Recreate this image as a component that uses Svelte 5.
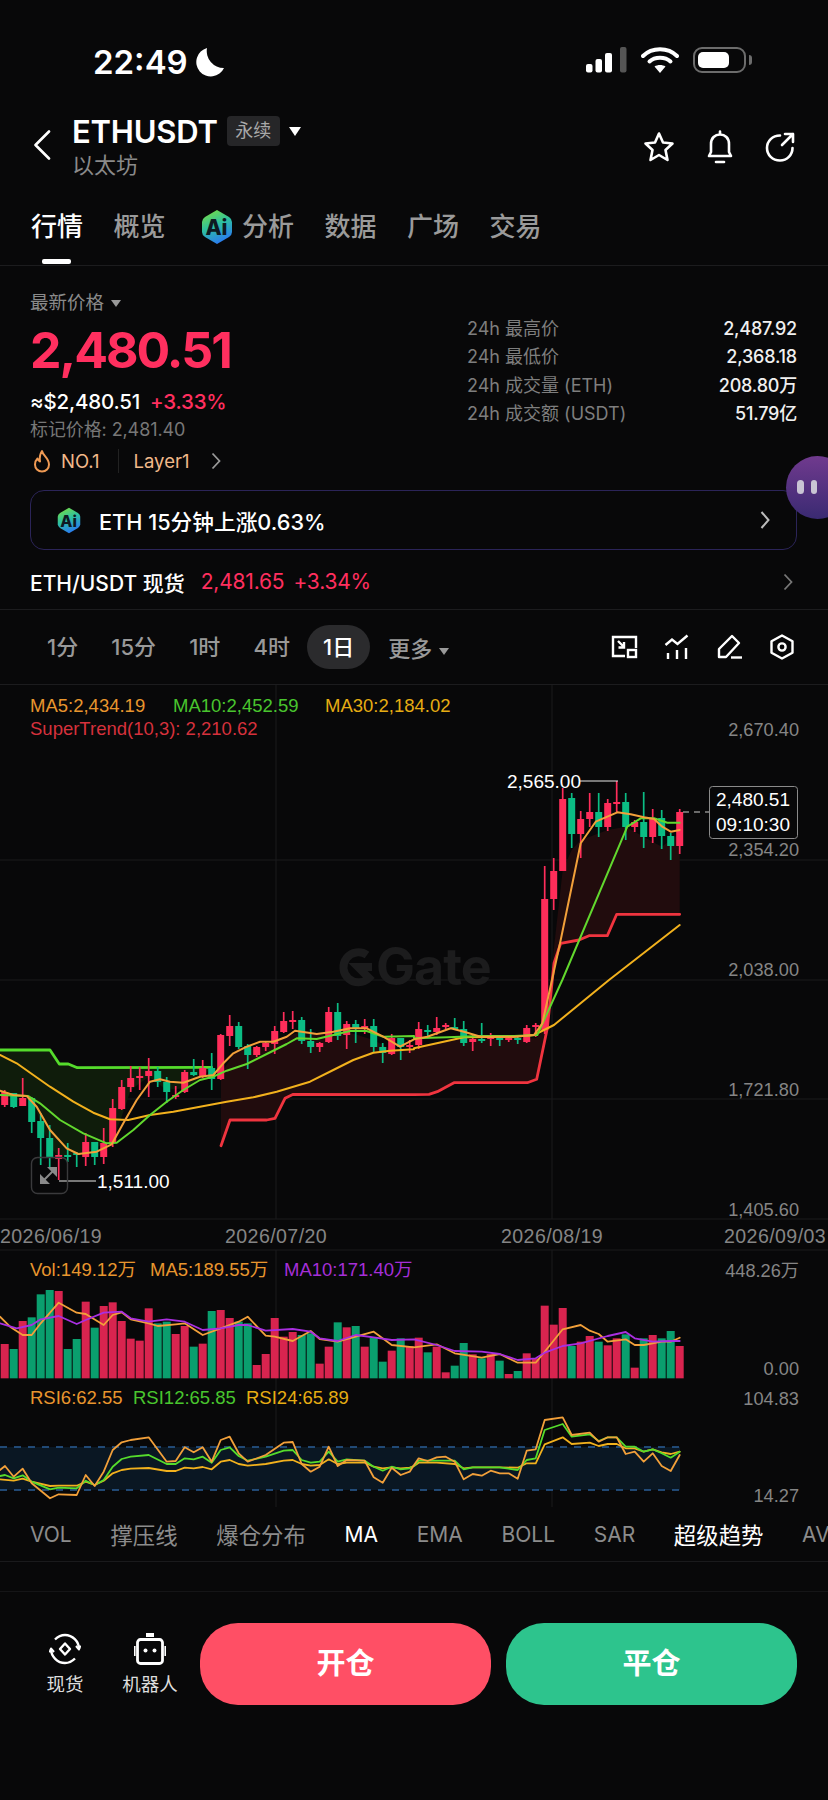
<script>
  const G = '#0bbd84', R = '#ff2d5a';
  // [bodyTop, bodyBottom, wickTop, wickBottom, colour]
  const raw = [
    [1092,1105,1090,1107,'r'],[1093,1107,1093,1108,'g'],[1098,1106,1078,1106,'r'],[1098,1122,1097,1133,'g'],
    [1121,1138,1113,1165,'g'],[1138,1158,1125,1167,'g'],[1155,1159,1148,1180,'r'],[1155,1157,1143,1162,'g'],
    [1153,1155,1152,1167,'g'],[1142,1157,1133,1166,'r'],[1142,1157,1142,1165,'g'],[1143,1157,1128,1164,'r'],
    [1108,1143,1099,1147,'r'],[1087,1109,1080,1110,'r'],[1078,1087,1066,1092,'r'],[1076,1078,1067,1090,'r'],
    [1071,1076,1058,1097,'r'],[1071,1082,1067,1087,'g'],[1082,1092,1077,1103,'g'],[1095,1097,1086,1099,'r'],
    [1072,1092,1070,1093,'r'],[1072,1075,1059,1076,'g'],[1068,1077,1060,1078,'r'],[1068,1079,1053,1090,'g'],
    [1035,1079,1034,1080,'r'],[1026,1036,1015,1046,'r'],[1026,1047,1022,1049,'g'],[1046,1055,1044,1069,'g'],
    [1047,1055,1046,1057,'r'],[1043,1047,1041,1051,'r'],[1031,1044,1026,1054,'r'],[1021,1032,1012,1033,'r'],
    [1020,1022,1011,1029,'r'],[1020,1041,1017,1044,'g'],[1041,1047,1029,1053,'g'],[1043,1047,1042,1052,'r'],
    [1012,1042,1007,1043,'r'],[1012,1036,1003,1040,'g'],[1024,1035,1021,1049,'r'],[1024,1029,1020,1043,'g'],
    [1026,1028,1019,1034,'r'],[1026,1047,1019,1053,'g'],[1047,1053,1043,1063,'g'],[1038,1054,1034,1055,'r'],
    [1038,1047,1038,1060,'g'],[1045,1047,1040,1053,'r'],[1029,1045,1022,1049,'r'],[1030,1032,1025,1036,'g'],
    [1028,1032,1017,1035,'r'],[1025,1027,1023,1029,'r'],[1027,1029,1018,1030,'g'],[1029,1043,1021,1046,'g'],
    [1039,1042,1035,1051,'r'],[1039,1041,1023,1043,'g'],[1037,1039,1033,1046,'r'],[1038,1040,1035,1046,'g'],
    [1038,1040,1037,1042,'r'],[1038,1040,1036,1044,'g'],[1028,1042,1025,1043,'r'],[1025,1027,1023,1037,'r'],
    [899,1030,866,1034,'r'],[871,899,858,910,'r'],[799,871,788,871,'r'],[798,834,793,848,'g'],
    [819,834,811,858,'r'],[812,819,793,827,'r'],[812,827,793,837,'g'],[803,827,799,831,'r'],
    [802,804,781,813,'r'],[802,827,793,840,'g'],[822,827,820,832,'r'],[822,837,792,848,'g'],
    [818,837,809,843,'r'],[818,836,810,849,'g'],[836,846,833,860,'g'],[812,846,809,854,'r']
  ];
  const cx = (i) => 4.7 + 9 * i;
  const candles = raw.map((c, i) => ({ x: cx(i), t: c[0], b: c[1], h: c[2], l: c[3], col: c[4] === 'g' ? G : R }));

  const volTops = [
    [312,'r'],[327,'g'],[243,'r'],[232,'g'],[163,'g'],[150,'g'],[153,'r'],[327,'g'],[297,'g'],[185,'r'],[263,'g'],[198,'r'],
    [187,'r'],[243,'r'],[296,'r'],[302,'r'],[205,'r'],[250,'g'],[245,'g'],[282,'r'],[258,'r'],[320,'g'],[311,'r'],[213,'g'],
    [210,'r'],[234,'r'],[245,'g'],[250,'g'],[375,'r'],[342,'r'],[234,'r'],[290,'r'],[276,'r'],[285,'g'],[280,'g'],[371,'r'],
    [320,'r'],[247,'g'],[262,'r'],[258,'g'],[320,'r'],[292,'g'],[365,'g'],[332,'r'],[295,'g'],[318,'r'],
    [293,'r'],[337,'g'],[320,'r'],[397,'r'],[377,'g'],[309,'g'],[343,'r'],[355,'g'],[342,'r'],[362,'g'],[402,'r'],[393,'g'],
    [340,'r'],[355,'r'],[197,'r'],[254,'r'],[204,'r'],[318,'g'],[305,'r'],[288,'r'],[305,'g'],[316,'r'],[295,'r'],[283,'g'],
    [383,'r'],[295,'g'],[285,'r'],[295,'g'],[273,'g'],[318,'r']
  ];
  const vols = volTops.map((v, i) => ({ x: cx(i) - 4, y: 1240 + v[0] / 3, h: (415 - v[0]) / 3, col: v[1] === 'g' ? '#0a9f6e' : '#d8244f' }));

  // zoom-crop coordinates → page coordinates
  const z = (ox, oy) => (pts) => pts.map(([x, y]) => [ox + x / 3, oy + y / 3]);
  const z5 = z(0, 960), z6 = z(414, 980), z4 = z(414, 680), z7 = z(0, 1240), z8 = z(414, 1240);
  const P = (pts) => pts.map((p) => p[0].toFixed(1) + ',' + p[1].toFixed(1)).join(' ');

  const ma5 = P([...z5([[0,392],[40,405],[80,408],[110,440],[150,510],[200,565],[235,582],[290,575],[335,553],[370,490],[410,420],[450,365],[480,358],[510,365],[550,368],[600,350],[640,345],[670,310],[700,280],[740,260],[780,245],[820,245],[860,230],[885,212],[950,222],[1000,215],[1050,205],[1100,205],[1150,230],[1200,260]]),
    ...z6([[0,178],[40,170],[110,145],[150,155],[200,170],[300,170],[360,165],[385,130]]),
    ...z4([[414,900],[440,780],[500,490],[545,425],[610,397],[650,403],[690,412],[720,417],[745,440],[770,455],[797,450]])]);
  const ma10 = P([...z5([[0,405],[85,408],[120,430],[180,480],[250,520],[320,550],[350,548],[400,510],[450,465],[500,425],[550,390],[600,360],[640,350],[680,332],[740,312],[800,282],[860,252],[890,235],[950,237],[1000,225],[1050,213],[1100,213],[1150,230],[1242,228]]),
    ...z6([[0,175],[100,172],[200,168],[300,168],[370,165]]),
    ...z4([[445,900],[640,440],[680,415],[720,415],[760,428],[797,428]])]);
  const ma30 = P([...z5([[0,285],[50,310],[100,345],[150,380],[220,425],[280,458],[330,478],[385,480],[450,465],[520,455],[600,440],[680,425],[760,412],[830,395],[930,365],[1000,330],[1060,300],[1120,278],[1170,272],[1242,268]]),
    ...z6([[0,205],[150,172],[300,170],[360,165],[420,135]]),
    ...z4([[585,900],[797,735]])]);
  const stGreen = z5([[0,270],[150,270],[178,312],[205,312],[232,323],[635,322]]);
  const stGreenFill = [...stGreen, ...z5([[608,350],[554,385],[500,390],[446,350],[392,390],[365,470],[338,540],[284,565],[230,585],[176,590],[150,560],[122,490],[95,410],[0,395]])];
  const stRed = [...z5([[663,557],[690,480],[800,480],[825,475],[855,415],[880,403],[1242,404]]),
    ...z6([[45,343],[70,335],[120,308],[340,308],[368,298],[400,145]]),
    ...z4([[420,850],[440,790],[495,780],[525,767],[580,767],[608,703],[797,703]])];
  const stRedFill = [...z5([[663,340],[716,260],[770,270],[824,240],[905,215],[986,225],[1040,215],[1121,240],[1175,270],[1242,265]]),
    ...z6([[0,200],[150,175],[365,175],[392,150]]),
    ...z4([[446,570],[473,510],[500,480],[527,470],[581,450],[635,440],[689,470],[743,500],[797,460]]),
    ...[...stRed].reverse()];

  const vma5 = P([...z7([[0,230],[30,260],[68,285],[95,285],[122,250],[176,188],[230,218],[257,222],[311,255],[338,225],[365,217],[392,238],[446,250],[473,258],[527,253],[554,250],[608,285],[662,265],[716,245],[743,230],[797,287],[824,290],[878,303],[932,273],[959,297],[1013,305],[1067,290],[1121,275],[1175,315],[1242,322]]),
    ...z8([[68,313],[122,340],[203,353],[257,342],[311,368],[365,368],[392,335],[446,268],[500,255],[527,272],[554,282],[581,305],[635,298],[662,315],[689,315],[743,305],[770,305],[797,293]])]);
  const vma10 = P([...z7([[0,250],[50,265],[95,255],[122,238],[176,228],[230,252],[257,240],[311,218],[365,215],[392,235],[446,245],[500,238],[554,245],[608,270],[662,265],[716,255],[743,255],[797,272],[878,267],[932,275],[959,295],[1013,303],[1067,285],[1121,292],[1175,300],[1242,298]]),
    ...z8([[68,315],[122,333],[203,335],[257,342],[311,360],[365,355],[392,338],[446,318],[500,310],[581,288],[635,276],[662,295],[716,305],[770,303],[797,303]])]);

  const rsi6 = P([...z7([[0,690],[15,678],[41,710],[68,686],[95,730],[150,775],[176,763],[230,765],[257,705],[284,738],[311,695],[338,630],[365,607],[392,600],[446,592],[500,665],[527,663],[554,622],[581,637],[608,622],[635,665],[662,600],[689,590],[716,640],[743,665],[797,645],[851,608],[878,606],[905,672],[932,695],[959,680],[986,620],[1013,678],[1040,660],[1094,662],[1121,712],[1148,728],[1175,683],[1202,705],[1229,695]]),
    ...z8([[0,675],[14,655],[41,663],[68,652],[95,650],[122,665],[149,718],[176,702],[203,707],[230,692],[257,700],[284,700],[311,716],[338,632],[365,628],[392,540],[446,532],[473,585],[527,578],[554,605],[581,592],[608,592],[635,642],[662,635],[689,665],[716,640],[743,678],[770,693],[797,645]])]);
  const rsi12 = P([...z7([[0,708],[15,705],[41,715],[68,706],[95,725],[150,748],[176,743],[230,745],[257,722],[284,735],[311,720],[338,680],[365,657],[392,650],[446,645],[500,672],[527,672],[554,655],[581,658],[608,650],[635,668],[662,630],[689,622],[716,648],[743,662],[797,650],[851,632],[878,630],[905,660],[932,668],[959,665],[986,635],[1013,665],[1040,658],[1094,662],[1121,680],[1148,692],[1175,680],[1202,688],[1229,685]]),
    ...z8([[0,678],[14,662],[68,662],[122,662],[149,688],[176,682],[257,682],[311,690],[338,660],[365,655],[392,570],[446,552],[473,590],[527,583],[554,603],[581,592],[608,592],[635,620],[662,620],[689,635],[716,628],[743,640],[770,653],[797,635]])]);
  const rsi24 = P([...z7([[0,718],[41,722],[68,716],[95,725],[150,738],[176,737],[230,737],[257,725],[284,735],[311,722],[338,700],[365,690],[392,686],[446,684],[500,693],[527,693],[554,683],[581,685],[608,681],[635,688],[662,665],[689,660],[716,672],[743,677],[797,672],[851,662],[878,660],[905,672],[932,677],[959,675],[986,658],[1013,672],[1040,668],[1094,668],[1121,680],[1148,685],[1175,682],[1202,685],[1229,683]]),
    ...z8([[0,678],[14,668],[68,668],[122,672],[149,685],[176,682],[257,682],[311,683],[338,670],[365,670],[392,613],[446,592],[473,612],[527,608],[554,618],[581,612],[608,612],[635,625],[662,625],[689,635],[716,628],[743,637],[770,642],[797,635]])]);

  const priceAxis = [['2,670.40',729],['2,354.20',849],['2,038.00',969],['1,721.80',1089],['1,405.60',1209]];
  const dates = [['2026/06/19',0],['2026/07/20',225],['2026/08/19',501],['2026/09/03',724]];
  const stats = [['24h 最高价','2,487.92'],['24h 最低价','2,368.18'],['24h 成交量 (ETH)','208.80万'],['24h 成交额 (USDT)','51.79亿']];
  const tabs = ['概览'];
  const tabsAfter = ['数据','广场','交易'];
  const frames = ['1分','15分','1时','4时','1日'];
  const inds = ['VOL','撑压线','爆仓分布','MA','EMA','BOLL','SAR','超级趋势','AVL'];
  const isCjk = (s) => /[^\x00-\x7f]/.test(s);
</script>

{#snippet aiIcon(w, h)}
  <svg class="ai" width={w} height={h} viewBox="0 0 32 36">
    <defs>
      <linearGradient id="aig" x1="0.1" y1="0" x2="0.5" y2="1">
        <stop offset="0" stop-color="#7fe03a" />
        <stop offset="0.5" stop-color="#2dc0a0" />
        <stop offset="1" stop-color="#2a7cf0" />
      </linearGradient>
    </defs>
    <path d="M16 1 L28 8 Q31 10 31 13 V23 Q31 26 28 28 L16 35 L4 28 Q1 26 1 23 V13 Q1 10 4 8Z" fill="url(#aig)" />
    <text class="aitext" x="15.5" y="26">Ai</text>
  </svg>
{/snippet}

<div class="page">
  <div class="status">
    <span class="time">22:49</span>
    <svg class="moon" width="30" height="30" viewBox="0 0 30 30"><path d="M12 1 A14.5 14.5 0 1 0 29 21 A17 17 0 0 1 12 1Z" fill="#fff" /></svg>
    <span class="grow"></span>
    <svg width="42" height="26" viewBox="0 0 42 26">
      <rect x="0" y="17" width="6.5" height="8.5" rx="2" fill="#fff" /><rect x="9.5" y="12" width="6.5" height="13.5" rx="2" fill="#fff" />
      <rect x="19" y="6" width="7" height="19.5" rx="2" fill="#fff" /><rect x="34" y="0" width="6.5" height="25.5" rx="2" fill="#555" />
    </svg>
    <svg class="wifi" width="38" height="26" viewBox="0 0 38 26" fill="none" stroke="#fff" stroke-linecap="round">
      <path d="M2 9 C11 0 27 0 36 9" stroke-width="4" /><path d="M8.5 14.5 C14 9.5 24 9.5 29.5 14.5" stroke-width="4" />
      <path d="M19 26 L13.5 19.5 C16.5 17.5 21.5 17.5 24.5 19.5Z" fill="#fff" stroke="none" />
    </svg>
    <div class="battery"><i></i></div>
    <span class="nub"></span>
  </div>

  <div class="head">
    <svg width="18" height="30" viewBox="0 0 18 30" fill="none"><path d="M16 1.5 L2.5 15 L16 28.5" stroke="#fff" stroke-width="2.6" stroke-linejoin="round" stroke-linecap="round" /></svg>
    <div class="title">
      <div class="t1"><b>ETHUSDT</b><span class="badge">永续</span><span class="tri"></span></div>
      <div class="t2">以太坊</div>
    </div>
    <span class="grow"></span>
    <div class="hicons">
      <svg width="32" height="32" viewBox="0 0 32 32" fill="none" stroke="#fff" stroke-width="2.6" stroke-linejoin="round"><path d="M16 2.5 L20 11.5 L29.5 12.5 L22.5 19 L24.5 29 L16 24 L7.5 29 L9.5 19 L2.5 12.5 L12 11.5Z" /></svg>
      <svg width="30" height="34" viewBox="0 0 30 34" fill="none" stroke="#fff" stroke-width="2.6" stroke-linecap="round" stroke-linejoin="round"><path d="M15 1.5 V4 M4 26 H26 L24 22 V14 C24 8 20 4.5 15 4.5 C10 4.5 6 8 6 14 V22Z" /><path d="M11 32 H19" /></svg>
      <svg width="30" height="30" viewBox="0 0 30 30" fill="none" stroke="#fff" stroke-width="2.6" stroke-linecap="round" stroke-linejoin="round"><path d="M15 3.5 C7.5 3.5 2 9 2 16 C2 23 7.5 28.5 15 28.5 C22 28.5 27.5 23 27.5 16" /><path d="M17 13 L28 2 M20 2 H28 V10" /></svg>
    </div>
  </div>

  <div class="tabs">
    <span class="tab active">行情<i class="under"></i></span>
    {#each tabs as t}<span class="tab">{t}</span>{/each}
    <span class="tab aitab">{@render aiIcon(32, 36)}分析</span>
    {#each tabsAfter as t}<span class="tab">{t}</span>{/each}
  </div>

  <div class="summary">
    <div class="left">
      <div class="lp">最新价格<span class="tri small"></span></div>
      <div class="price">2,480.51</div>
      <div class="usd">≈$2,480.51<span class="pct">+3.33%</span></div>
      <div class="mark">标记价格: 2,481.40</div>
      <div class="hot">
        <svg width="18" height="24" viewBox="0 0 18 24" fill="none" stroke="#ef9a54" stroke-width="2"><path d="M9 2 C10 7 16 9 16 15.5 C16 19.5 13 22.5 9 22.5 C5 22.5 2 19.5 2 15.5 C2 13 3 11 4.5 9.5 C5 11 5.5 12 7 12.5 C6.5 9 7 5 9 2Z" stroke-linejoin="round" /></svg>
        <span class="no">NO.1</span><i class="vline"></i><span>Layer1</span>
        <svg class="c1" width="10" height="18" viewBox="0 0 10 18" fill="none"><path d="M1.5 1.5 L8.5 9 L1.5 16.5" stroke="#999" stroke-width="1.8" /></svg>
      </div>
    </div>
    <div class="right">
      {#each stats as s}
        <div class="stat"><span>{s[0]}</span><b>{s[1]}</b></div>
      {/each}
    </div>
  </div>

  <div class="banner">
    {@render aiIcon(24, 27)}
    <span>ETH 15分钟上涨0.63%</span>
    <span class="grow"></span>
    <svg width="10" height="20" viewBox="0 0 10 20" fill="none"><path d="M1.5 2 L8.5 10 L1.5 18" stroke="#bbb" stroke-width="2" /></svg>
  </div>

  <div class="spot">
    <span class="sname">ETH/USDT 现货</span><span class="sp">2,481.65</span><span class="sp">+3.34%</span>
    <span class="grow"></span>
    <svg width="10" height="18" viewBox="0 0 10 18" fill="none"><path d="M1.5 1.5 L8.5 9 L1.5 16.5" stroke="#777" stroke-width="1.8" /></svg>
  </div>

  <div class="frames">
    {#each frames as f}
      <span class="fr" class:on={f === '1日'}>{f}</span>
    {/each}
    <span class="more">更多<span class="tri small grey"></span></span>
    <span class="grow"></span>
    <div class="ticons">
      <svg width="28" height="26" viewBox="0 0 28 26" fill="none" stroke="#fff" stroke-width="2.4"><path d="M15 22 H3 V3 H26 V14" /><rect x="18" y="16" width="8" height="7" /><path d="M8 7 L14 13 M14 8 V13.5 H8.5" /></svg>
      <svg width="26" height="26" viewBox="0 0 26 26" fill="none" stroke="#fff" stroke-width="2.4"><path d="M1.5 11 L8 5.5 L13.5 10 L23.5 1.5" /><path d="M4 19 V25 M13 16 V25 M22 14 V25" /></svg>
      <svg width="26" height="26" viewBox="0 0 26 26" fill="none" stroke="#fff" stroke-width="2.4" stroke-linejoin="round"><path d="M2 23 V15 L15 2 L22 9 L9 23Z" /><path d="M14 23.5 H25" /></svg>
      <svg width="26" height="26" viewBox="0 0 26 26" fill="none" stroke="#fff" stroke-width="2.4" stroke-linejoin="round"><path d="M13 1.5 L23.5 7.2 V18.8 L13 24.5 L2.5 18.8 V7.2Z" /><circle cx="13" cy="13" r="3.6" /></svg>
    </div>
  </div>

  <svg class="chart" width="828" height="822" viewBox="0 685 828 822">
    <g class="grid">
      <line x1="0" x2="828" y1="860" y2="860" /><line x1="0" x2="828" y1="980" y2="980" />
      <line x1="0" x2="828" y1="1099" y2="1099" /><line x1="0" x2="828" y1="1219" y2="1219" />
      <line x1="0" x2="828" y1="1250" y2="1250" />
      <line x1="276" x2="276" y1="685" y2="1219" /><line x1="552" x2="552" y1="685" y2="1219" />
      <line x1="276" x2="276" y1="1250" y2="1507" /><line x1="552" x2="552" y1="1250" y2="1507" />
    </g>

    <text class="wm" x="376" y="985">Gate</text>
    <path d="M367 955 A15 15 0 1 0 369 978 L358 967 H372" fill="none" stroke="#1c1c1d" stroke-width="8" />

    <polygon points={P(stGreenFill)} fill="#0f1c0b" />
    <polygon points={P(stRedFill)} fill="#210c0d" />
    <polyline points={P(stGreen)} class="ln" stroke="#55dc2c" stroke-width="2.8" />
    <polyline points={P(stRed)} class="ln" stroke="#f0343f" stroke-width="2.8" />

    {#each candles as c}
      <line x1={c.x} x2={c.x} y1={c.h} y2={c.l} stroke={c.col} stroke-width="1.7" />
      <rect x={c.x - 3.5} y={c.t} width="7" height={c.b - c.t} fill={c.col} />
    {/each}

    <polyline points={ma30} class="ln" stroke="#f2b11d" stroke-width="2" />
    <polyline points={ma10} class="ln" stroke="#62d82e" stroke-width="2" />
    <polyline points={ma5} class="ln" stroke="#f2a03a" stroke-width="2" />

    <text class="lg" x="30" y="712" fill="#e8962e">MA5:2,434.19</text>
    <text class="lg" x="173" y="712" fill="#49c52e">MA10:2,452.59</text>
    <text class="lg" x="325" y="712" fill="#e6ad13">MA30:2,184.02</text>
    <text class="lg" x="30" y="735" fill="#d6313c">SuperTrend(10,3): 2,210.62</text>

    {#each priceAxis as a}
      <text class="ax end" x="799" y={a[1] + 6.5}>{a[0]}</text>
    {/each}

    <text class="wh" x="507" y="787.5">2,565.00</text>
    <line x1="580" x2="618" y1="781" y2="781" stroke="#e8e8e8" stroke-width="1.2" />
    <text class="wh" x="97" y="1187.5">1,511.00</text>
    <line x1="59" x2="96" y1="1181" y2="1181" stroke="#e8e8e8" stroke-width="1.2" />

    <line x1="683" x2="709" y1="812" y2="812" stroke="#ccc" stroke-width="1.2" stroke-dasharray="6 5" />
    <rect x="709.5" y="786.5" width="88" height="52" rx="3" fill="#080809" stroke="#8a8a8a" />
    <text class="wh mid" x="753" y="806">2,480.51</text>
    <text class="wh mid" x="753" y="831">09:10:30</text>

    <rect x="31.5" y="1157.5" width="36" height="36" rx="6" fill="none" stroke="#3a3a3c" stroke-width="1.4" />
    <path d="M40 1174 V1184 H50 Z M47 1167 H57 V1177 Z" fill="#8a8a8a" />
    <path d="M44 1180 L53 1171" stroke="#8a8a8a" stroke-width="2" />

    {#each dates as d}
      <text class="dt" x={d[1]} y="1243">{d[0]}</text>
    {/each}

    <text class="lg" x="30" y="1276" fill="#e8962e">Vol:149.12万</text>
    <text class="lg" x="150" y="1276" fill="#e8962e">MA5:189.55万</text>
    <text class="lg" x="284" y="1276" fill="#a52fd8">MA10:171.40万</text>
    <text class="ax end" x="799" y="1277">448.26万</text>
    <text class="ax end" x="799" y="1375">0.00</text>

    {#each vols as v}
      <rect x={v.x} y={v.y} width="8" height={v.h} fill={v.col} />
    {/each}
    <polyline points={vma5} class="ln" stroke="#f2a03a" stroke-width="1.8" />
    <polyline points={vma10} class="ln" stroke="#a92fe0" stroke-width="1.8" />

    <text class="lg" x="30" y="1404" fill="#e8962e">RSI6:62.55</text>
    <text class="lg" x="133" y="1404" fill="#49c52e">RSI12:65.85</text>
    <text class="lg" x="246" y="1404" fill="#e6ad13">RSI24:65.89</text>
    <text class="ax end" x="799" y="1405">104.83</text>
    <text class="ax end" x="799" y="1502">14.27</text>

    <rect x="0" y="1447" width="680" height="43" fill="#0a1723" />
    <line x1="0" x2="680" y1="1447" y2="1447" class="dash" />
    <line x1="0" x2="680" y1="1490" y2="1490" class="dash" />
    <polyline points={rsi24} class="ln" stroke="#f2b11d" stroke-width="1.8" />
    <polyline points={rsi12} class="ln" stroke="#55dc2c" stroke-width="1.8" />
    <polyline points={rsi6} class="ln" stroke="#f2a03a" stroke-width="1.8" />
  </svg>

  <div class="inds">
    {#each inds as n}
      <span class="ind" class:lit={n === 'MA' || n === '超级趋势'} class:cjk={isCjk(n)}>{n}</span>
    {/each}
  </div>

  <div class="gapbar"></div>

  <div class="actions">
    <div class="act">
      <svg width="32" height="32" viewBox="0 0 32 32" fill="none" stroke="#fff" stroke-width="2.4" stroke-linejoin="round">
        <path d="M6 6.5 C9 3.5 12.5 2 16 2 C23.5 2 30 8.5 30 16 M26 25.5 C23 28.5 19.5 30 16 30 C8.5 30 2 23.5 2 16" />
        <path d="M27 13 L30 16.5 L31.5 12.5 M5 19 L2 15.5 L0.5 19.5" stroke-width="2" />
        <path d="M16 10.5 L21 16 L16 21.5 L11 16Z" />
      </svg>
      <span>现货</span>
    </div>
    <div class="act second">
      <svg width="32" height="32" viewBox="0 0 32 32" fill="none" stroke="#fff" stroke-width="2.8">
        <rect x="3.5" y="6.5" width="25" height="24" rx="3" />
        <path d="M12 2 H20" stroke-width="4" />
        <path d="M0.8 13 V23 M31.2 13 V23" stroke-width="1.6" />
        <circle cx="11.5" cy="17.5" r="2" fill="#fff" stroke="none" /><circle cx="20.5" cy="17.5" r="2" fill="#fff" stroke="none" />
      </svg>
      <span>机器人</span>
    </div>
    <div class="btn open">开仓</div>
    <div class="btn close">平仓</div>
  </div>

  <div class="orb"><i></i><i></i></div>
</div>

<style>
  :global(body) { margin: 0; background: #080809; }
  .page {
    position: relative;
    width: 828px;
    height: 1800px;
    overflow: hidden;
    background: #080809;
    color: #fff;
    font-family: Inter, "Noto Sans CJK SC", sans-serif;
  }
  .grow { flex: 1; }
  .status { height: 109px; display: flex; align-items: flex-start; box-sizing: border-box; padding: 47px 76px 0 93px; }
  .time { font-size: 33px; font-weight: 600; line-height: 30px; height: 30px; }
  .moon { margin: 0 0 0 7px; }
  .wifi { margin-left: 13px; }
  .battery { margin-left: 14px; width: 53px; height: 26px; box-sizing: border-box; border: 2px solid #6c6c6c; border-radius: 9px; padding: 3px; }
  .battery i { display: block; width: 31px; height: 16px; background: #fff; border-radius: 5px; }
  .nub { width: 3px; height: 10px; margin: 8px 0 0 3px; background: #6c6c6c; border-radius: 0 3px 3px 0; }

  .head { height: 72px; display: flex; align-items: center; padding: 0 33px; position: relative; }
  .title { margin-left: 21px; }
  .t1 { display: flex; align-items: center; height: 40px; }
  .t1 b { font-size: 31px; font-weight: 600; letter-spacing: -0.2px; }
  .badge { margin-left: 9px; width: 53px; height: 30px; line-height: 30px; text-align: center; background: #262628; border-radius: 4px; font-size: 18px; color: #a8a8a8; }
  .tri { display: inline-block; width: 0; height: 0; margin-left: 9px; border-left: 6.5px solid transparent; border-right: 6.5px solid transparent; border-top: 9px solid #fff; }
  .tri.small { margin-left: 7px; border-left-width: 5.5px; border-right-width: 5.5px; border-top: 7px solid #999; vertical-align: 2px; }
  .t2 { font-size: 22px; line-height: 28px; color: #8a8a8a; }
  .hicons { display: flex; align-items: center; gap: 30px; margin-top: 3px; }

  .tabs { height: 85px; box-sizing: border-box; border-bottom: 1px solid #1c1c1e; display: flex; align-items: flex-start; padding: 26px 0 0 31px; gap: 30.5px; font-size: 26px; font-weight: 500; color: #9a9a9a; line-height: 40px; }
  .tab { position: relative; display: flex; align-items: center; white-space: nowrap; }
  .tab.active { color: #fff; }
  .under { position: absolute; left: 11px; top: 52px; width: 29px; height: 5px; background: #fff; border-radius: 2px; }
  .aitab { margin-left: 5px; gap: 9px; }
  .ai { flex: none; display: block; }
  .aitext { font: 800 21px Inter, sans-serif; fill: #0e1a22; text-anchor: middle; }

  .summary { display: flex; justify-content: space-between; padding: 24px 31px 0 30px; height: 224px; box-sizing: border-box; }
  .lp { font-size: 18.5px; color: #8a8a8a; line-height: 24px; }
  .price { font-size: 50px; font-weight: 650; line-height: 56px; margin-top: 8px; color: #ff2f5f; letter-spacing: -2px; }
  .usd { font-size: 20.5px; font-weight: 500; line-height: 28px; margin-top: 10px; letter-spacing: -0.2px; }
  .pct { margin-left: 10px; color: #ff2f5f; }
  .mark { font-size: 18px; color: #777; line-height: 28px; letter-spacing: -0.1px; }
  .hot { display: flex; align-items: center; height: 28px; margin-top: 3px; padding-left: 3px; font-size: 18.5px; color: #f2b98a; }
  .no { margin-left: 10px; }
  .vline { width: 1px; height: 24px; background: #222; margin: 0 15px 0 18px; }
  .c1 { margin-left: 22px; }
  .right { width: 330px; margin-top: 25px; }
  .stat { display: flex; justify-content: space-between; height: 28.3px; line-height: 28.3px; font-size: 18px; color: #7e7e7e; }
  .stat b { font-size: 18px; font-weight: 500; color: #f0f0f0; letter-spacing: -0.2px; }

  .banner { display: flex; align-items: center; gap: 18px; margin: 0 31px 0 30px; height: 60px; box-sizing: border-box; padding: 0 26px; border: 1px solid #2b2458; border-radius: 14px; font-size: 21.7px; font-weight: 500; }

  .spot { height: 60px; box-sizing: border-box; border-bottom: 1px solid #1c1c1e; display: flex; align-items: center; padding: 4px 35px 0 30px; font-size: 21px; font-weight: 500; }
  .sp { color: #ff2f5f; font-weight: 400; font-size: 21px; letter-spacing: -0.2px; margin-left: 9px; }
  .sname { margin-right: 7px; }

  .frames { height: 75px; box-sizing: border-box; border-bottom: 1px solid #1c1c1e; display: flex; align-items: center; padding: 0 33px 0 31px; font-size: 22px; color: #999; font-weight: 500; }
  .fr { padding: 0 16px; height: 44px; line-height: 44px; border-radius: 22px; margin-right: 1.15px; }
  .fr.on { background: #2b2b2d; color: #fff; }
  .more { margin-left: 17px; }
  .ticons { display: flex; gap: 26.5px; align-items: center; }

  .chart { display: block; }
  .grid line { stroke: #1b1b1d; stroke-width: 1; }
  .ln { fill: none; stroke-linejoin: round; stroke-linecap: round; }
  .lg { font: 18.5px "Liberation Sans", "Noto Sans CJK SC", sans-serif; }
  .ax { font: 18.2px "Liberation Sans", "Noto Sans CJK SC", sans-serif; fill: #858585; }
  .dt { font: 19.6px "Liberation Sans", sans-serif; letter-spacing: 0.4px; fill: #858585; }
  .end { text-anchor: end; }
  .wh { font: 19px "Liberation Sans", sans-serif; fill: #fff; }
  .mid { text-anchor: middle; }
  .wm { font: 700 52px Inter, sans-serif; fill: #1c1c1d; letter-spacing: -1px; }
  .dash { stroke: #2a5d96; stroke-width: 1.5; stroke-dasharray: 7 7; }

  .inds { height: 55px; box-sizing: border-box; border-bottom: 1px solid #1a1a1c; display: flex; align-items: center; gap: 38.7px; padding-left: 30px; font-size: 21px; color: #8c8c8c; white-space: nowrap; overflow: hidden; }
  .ind.cjk { font-size: 22.4px; }
  .ind.lit { color: #fff; }
  .gapbar { height: 30px; box-sizing: border-box; border-bottom: 1px solid #151517; }

  .actions { display: flex; align-items: flex-start; padding: 31px 31px 0 0; }
  .act { width: 60px; margin-left: 35px; display: flex; flex-direction: column; align-items: center; font-size: 18.5px; color: #ddd; }
  .act span { margin-top: 6px; line-height: 26px; white-space: nowrap; }
  .act svg { margin-top: 10px; }
  .act.second { margin-left: 25px; margin-right: 20px; }
  .btn { width: 291px; height: 82px; line-height: 82px; text-align: center; border-radius: 38px; font-size: 29px; font-weight: 600; }
  .open { background: #ff4f65; margin-right: 15px; }
  .close { background: #2dc48d; }

  .orb { position: absolute; left: 786px; top: 456px; width: 63px; height: 63px; border-radius: 50%; background: linear-gradient(180deg, #703a8e 0%, #3a2a72 100%); display: flex; gap: 7px; padding: 24px 0 0 11px; box-sizing: border-box; }
  .orb i { width: 6.5px; height: 14px; border-radius: 3.5px; background: #c9c4d4; }
</style>
